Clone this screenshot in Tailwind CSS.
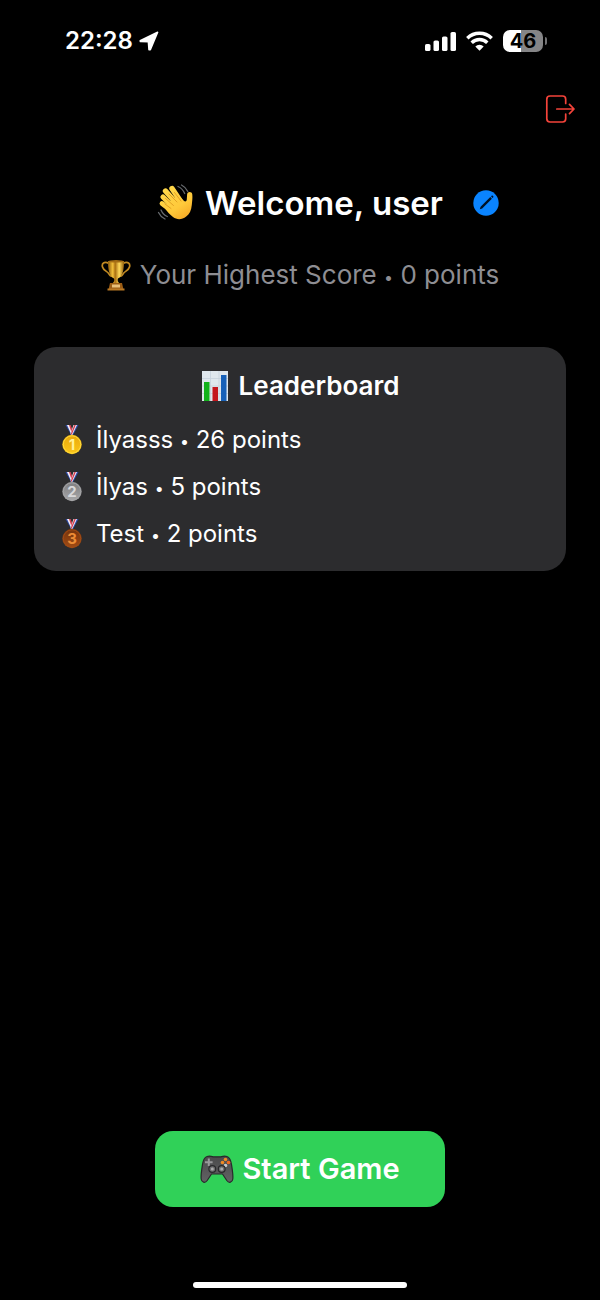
<!DOCTYPE html>
<html lang="en">
<head>
<meta charset="utf-8">
<meta name="viewport" content="width=device-width, initial-scale=1">
<title>Welcome</title>
<script src="https://cdn.jsdelivr.net/npm/@tailwindcss/browser@4"></script>
</head>
<body class="bg-black text-white font-['Inter',sans-serif]">
<svg class="absolute h-0 w-0" aria-hidden="true">
  <defs>
    <linearGradient id="gold" x1="0" x2="1"><stop offset="0" stop-color="#8a5a0c"/><stop offset=".3" stop-color="#f3c03a"/><stop offset=".45" stop-color="#a86d10"/><stop offset=".7" stop-color="#ffd95a"/><stop offset="1" stop-color="#8f5d0c"/></linearGradient>
    <linearGradient id="hand" gradientUnits="userSpaceOnUse" x1="8" y1="4" x2="30" y2="36"><stop offset="0" stop-color="#ffd84a"/><stop offset=".6" stop-color="#ffc93a"/><stop offset="1" stop-color="#f5a623"/></linearGradient>
    <linearGradient id="m1" x1="0" y1="0" x2="0" y2="1"><stop offset="0" stop-color="#e8a80c"/><stop offset="1" stop-color="#fbc61a"/></linearGradient>
    <linearGradient id="m2" x1="0" y1="0" x2="0" y2="1"><stop offset="0" stop-color="#7c7c7e"/><stop offset="1" stop-color="#a9a9ab"/></linearGradient>
    <linearGradient id="m3" x1="0" y1="0" x2="0" y2="1"><stop offset="0" stop-color="#74330d"/><stop offset="1" stop-color="#a24c14"/></linearGradient>
    <linearGradient id="pad" x1="0" y1="0" x2="0" y2="1"><stop offset="0" stop-color="#4a4a4b"/><stop offset="1" stop-color="#626264"/></linearGradient>
    <symbol id="ribbon" viewBox="0 0 24 30">
      <path d="M5.500 0h3.200l4.600 8-1.300 3.500z" fill="#2c4ba8"/><path d="M7 0h3l3 7-1 4z" fill="#f4f0f6"/><path d="M9 0h1.500l2 5-.8 3z" fill="#d43a4c"/>
      <path d="M18.500 0h-3.200l-4.600 9 1.300 3z" fill="#2c4ba8"/><path d="M17 0h-3.500l-3 9 1.300 2z" fill="#f4f0f6"/><path d="M15.800 0h-1.500l-3.500 9 .8 1z" fill="#d43a4c"/>
    </symbol>
  </defs>
</svg>
<div class="flex min-h-screen flex-col">
  <header class="flex h-[82px] shrink-0 items-center justify-between pr-[53px] pl-[65px]">
    <div class="flex items-center gap-1.5">
      <time class="text-2xl font-semibold">22:28</time>
      <svg class="h-5 w-5" viewBox="0 0 20 20" fill="#fff" stroke="#fff" stroke-width="1.600" stroke-linejoin="round" role="img" aria-label="Location"><path d="M1.200 9.800 18.600 1.300 11.300 18.800 10 18.800 9.400 10.700 1.400 10.500z"/></svg>
    </div>
    <div class="flex items-center gap-2.5">
      <svg class="h-5 w-[31px]" viewBox="0 0 31 20" fill="#fff" role="img" aria-label="Signal"><rect y="13" width="5.500" height="7" rx="1.600"/><rect x="8.500" y="9.500" width="5.500" height="10.500" rx="1.600"/><rect x="17" y="5.500" width="5.500" height="14.500" rx="1.600"/><rect x="25.500" y="1" width="5.500" height="19" rx="1.600"/></svg>
      <svg class="h-5 w-[27px]" viewBox="0 0 27 20" fill="none" stroke="#fff" stroke-width="3.400" role="img" aria-label="Wi-Fi"><path d="M1.300 7.200a17.400 17.400 0 0 1 24.400 0"/><path d="M5.700 11.800a11 11 0 0 1 15.600 0"/><path d="M9.300 15.500a6 6 0 0 1 8.400 0L13.500 19.800z" fill="#fff" stroke="none"/></svg>
      <div class="flex items-center gap-0.5" role="img" aria-label="Battery 46 percent">
        <div class="flex h-[22px] w-10 items-center justify-center rounded-[7px] bg-linear-to-r from-white from-46% to-[#858587] to-46% text-xl leading-5 font-bold text-black">46</div>
        <div class="h-2 w-0.5 rounded-r-full bg-[#737375]"></div>
      </div>
    </div>
  </header>

  <main class="flex grow flex-col">
    <div class="flex h-[54px] items-center justify-end pr-[25px]">
      <button type="button" aria-label="Log out">
        <svg class="h-[30px] w-[30px]" viewBox="0 0 30 30" fill="none" stroke="#f4433a" stroke-width="1.700" stroke-linecap="round" stroke-linejoin="round"><path d="M20.700 9.500V5.200a3.200 3.200 0 0 0-3.200-3.200H5a3.200 3.200 0 0 0-3.200 3.200v19.600A3.200 3.200 0 0 0 5 28h12.500a3.200 3.200 0 0 0 3.200-3.200V20"/><path d="M11.800 15h17M24.500 10.400l4.500 4.600-4.500 4.600"/></svg>
      </button>
    </div>

    <div class="mt-[45px] flex h-11 items-center justify-center pl-14">
      <svg class="mr-2.5 h-[38px] w-[38px] shrink-0" viewBox="0 0 38 38" role="img" aria-label="Waving hand">
        <g stroke="url(#hand)" stroke-linecap="round" fill="none"><path d="M17 24 6 13" stroke-width="5.200"/><path d="M20 20 8.500 7" stroke-width="5.400"/><path d="M24 18 15 4.500" stroke-width="5.400"/><path d="M15 27 5 19.500" stroke-width="4.800"/></g>
        <path d="m11 18 11-6 5 5c1.500 1 2.600.4 2.800-1.400l.3-5.200c.3-3.200 4.800-3.200 5.200 0 .4 3.500-.2 7-.5 10.500-.5 5.500-2.300 9.200-5.600 11.700-4.200 3.300-9.200 3.500-13.200.5C13.500 31 10 27.500 8 24.500z" fill="url(#hand)"/>
        <path d="m8.500 14.500 8 7M12 10l8 8M17.500 8.500l6.500 8.500M8 20l6 4.500" stroke="#dc961c" stroke-width=".8" fill="none" stroke-linecap="round"/>
        <path d="M21 2.500c3 1.300 5.300 3.700 6.700 7M24.500 1c2.800 1.400 4.900 3.600 6.300 6.500M4 26c1.300 3 3.500 5.300 6.300 6.500M1.500 28.500c1.400 3 3.700 5.200 6.500 6.500" stroke="#66696d" stroke-width="1.300" fill="none" stroke-linecap="round"/>
      </svg>
      <h1 class="text-[33px] leading-11 font-semibold whitespace-nowrap">Welcome, user</h1>
      <button type="button" class="ml-[30px] shrink-0" aria-label="Edit name">
        <svg class="h-[26px] w-[26px]" viewBox="0 0 26 26"><circle cx="13" cy="13" r="12.700" fill="#0a84ff"/><path d="m6.800 19.200.8-2.400L17.300 7.100l1.600 1.600-9.700 9.700zM18 6.400l.5-.5c.5-.4 1-.4 1.400 0l.2.2c.4.400.4.900 0 1.400l-.5.500z" fill="#001226"/></svg>
      </button>
    </div>

    <div class="mt-8 flex h-9 items-center justify-center gap-[9px]">
      <svg class="h-8 w-[30px] shrink-0" viewBox="0 0 30 32" role="img" aria-label="Trophy">
        <path d="M8 4.500C3 2 .5 4.500 1.500 8c1 3.800 5 4 6.500 7 .8 1.800 2 2.500 3.500 2.500M22 4.500c5-2.500 7.500 0 6.500 3.500-1 3.800-5 4-6.500 7-.8 1.800-2 2.500-3.500 2.500" stroke="#c28a22" stroke-width="1.700" fill="none"/>
        <path d="M7 2h16c.2 8-1.300 15.500-6 17.500-.7 1.500-.3 3.500 1.500 5h-7c1.800-1.500 2.200-3.500 1.500-5C8.300 17.500 6.800 10 7 2z" fill="url(#gold)"/><ellipse cx="15" cy="2.300" rx="8" ry="1.300" fill="#a46d14"/>
        <path d="M9 24h12l1.500 6.800h-15z" fill="#9c5d14"/><path d="M11 25.500h8v3h-8z" fill="#e9c07a"/><path d="M6.500 29.500h17v2h-17z" fill="#b97925"/>
      </svg>
      <p class="text-[26px] leading-9 whitespace-nowrap text-[#8e8e93]">Your Highest Score <span class="align-middle text-base leading-none">•</span> 0 points</p>
    </div>

    <section class="mx-[34px] mt-[54px] rounded-[22px] bg-[#2c2c2e] px-[26px] py-[21px]" aria-labelledby="board">
      <div class="flex items-center justify-center gap-2.5">
        <svg class="h-8 w-7" viewBox="0 0 28 32" role="img" aria-label="Bar chart"><path d="M1 1h26v30H1z" fill="#dfe7ed"/><path d="M1 8.500h26M1 16h26M1 23.500h26M9.500 1v30M18 1v30" stroke="#c5d2dc" stroke-width=".8"/><path d="M3 12h5.500v19H3z" fill="#12b21b"/><path d="M11.500 17H17v14h-5.500z" fill="#c4151c"/><path d="M20 5h5.500v26H20z" fill="#1660b8"/></svg>
        <h2 id="board" class="text-[26px] leading-9 font-semibold">Leaderboard</h2>
      </div>
      <ol class="mt-5 flex flex-col gap-[15px] text-2xl">
        <li class="flex h-8 items-center gap-3">
          <svg class="h-[30px] w-6" viewBox="0 0 24 30" role="img" aria-label="First"><use href="#ribbon"/><circle cx="12" cy="19.500" r="9.700" fill="url(#m1)"/><circle cx="12" cy="19.500" r="8.700" fill="none" stroke="#ffdc3c"/><text x="12" y="25" text-anchor="middle" font-size="15" font-weight="700" fill="#fff19a">1</text></svg>
          <span>İlyasss <span class="align-middle text-base leading-none">•</span> 26 points</span></li>
        <li class="flex h-8 items-center gap-3">
          <svg class="h-[30px] w-6" viewBox="0 0 24 30" role="img" aria-label="Second"><use href="#ribbon"/><circle cx="12" cy="19.500" r="9.700" fill="url(#m2)"/><circle cx="12" cy="19.500" r="8.700" fill="none" stroke="#a4a4a6"/><text x="12" y="25" text-anchor="middle" font-size="15" font-weight="700" fill="#d8d8da">2</text></svg>
          <span>İlyas <span class="align-middle text-base leading-none">•</span> 5 points</span></li>
        <li class="flex h-8 items-center gap-3">
          <svg class="h-[30px] w-6" viewBox="0 0 24 30" role="img" aria-label="Third"><use href="#ribbon"/><circle cx="12" cy="19.500" r="9.700" fill="url(#m3)"/><circle cx="12" cy="19.500" r="8.700" fill="none" stroke="#a04b16"/><text x="12" y="25" text-anchor="middle" font-size="15" font-weight="700" fill="#ec8c36">3</text></svg>
          <span>Test <span class="align-middle text-base leading-none">•</span> 2 points</span></li>
      </ol>
    </section>

    <button type="button" class="mx-auto mt-auto flex h-[76px] items-center gap-2 rounded-[18px] bg-[#30d158] px-[45px] text-[29px] font-semibold whitespace-nowrap">
      <svg class="h-8 w-[34px]" viewBox="0 0 34 32" role="img" aria-label="Game controller">
        <path d="M7 3.500c3-1 5 0 6.500.3h7C22 3.500 24 2.500 27 3.500c3 .8 3.800 3.500 4.500 8 .8 5 1.800 10.500 1.300 14.500-.4 3.500-3.800 4.500-6 1.500L22.500 21h-11l-4.300 6.500c-2.200 3-5.600 2-6-1.500C.7 22 1.700 16.500 2.500 11.500c.7-4.500 1.500-7.200 4.500-8z" fill="url(#pad)" stroke="#29292b" stroke-width="1.200"/>
        <path d="M8.800 5.500v7.500M5 9.300h7.600" stroke="#99999b" stroke-width="2"/>
        <circle cx="25.500" cy="6.500" r="1.800" fill="#f08a24"/><circle cx="22.500" cy="9.500" r="1.800" fill="#f08a24"/><circle cx="28.500" cy="9.500" r="1.800" fill="#f36a20"/><circle cx="25.500" cy="12.500" r="1.800" fill="#c9c9cb"/>
        <g fill="#6d6d6f" stroke="#29292b" stroke-width="1.200"><circle cx="12.300" cy="16" r="3.400"/><circle cx="21.700" cy="16" r="3.400"/></g><circle cx="12.300" cy="16" r="1.500" fill="#aaa"/><circle cx="21.700" cy="16" r="1.500" fill="#aaa"/>
      </svg>
      <span>Start Game</span>
    </button>
  </main>
  <footer class="mt-[75px] flex justify-center pb-3"><div class="h-1.5 w-[214px] rounded-full bg-white"></div></footer>
</div>
</body>
</html>
